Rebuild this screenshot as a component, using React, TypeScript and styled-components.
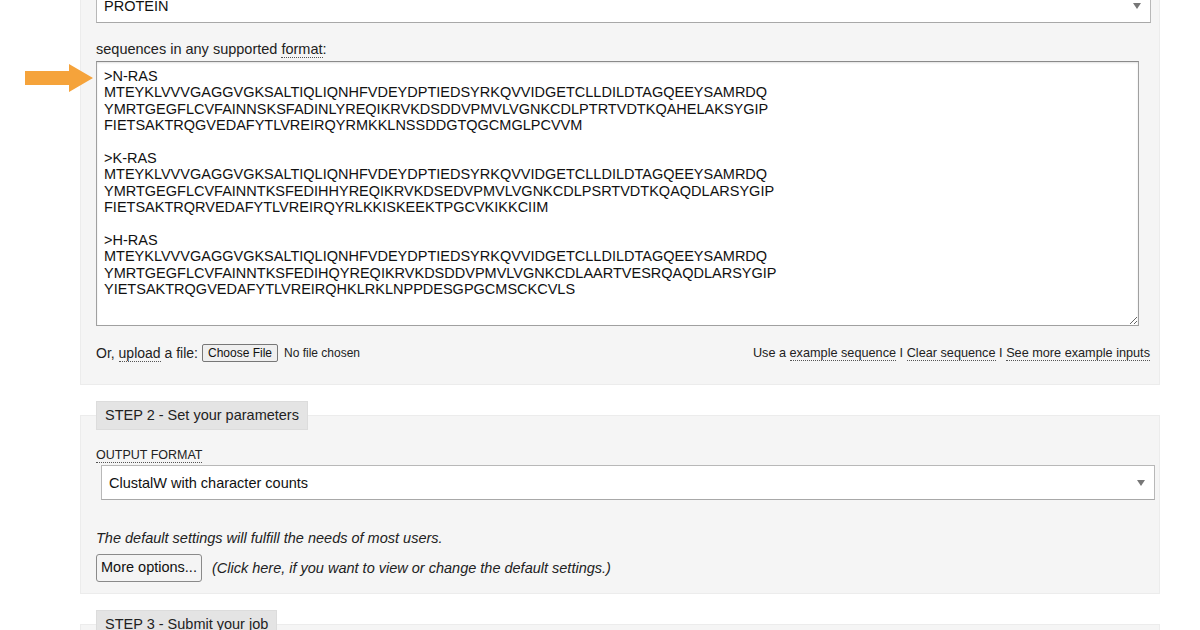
import React from 'react';
import styled, { createGlobalStyle } from 'styled-components';

const GlobalStyle = createGlobalStyle`
  html, body {
    margin: 0;
    padding: 0;
    background: #fff;
    font-family: 'Liberation Sans', Arial, Helvetica, sans-serif;
    color: #111;
    overflow: hidden;
  }
`;

const Page = styled.div`
  width: 1080px;
  margin: -12px 0 0 80px;
`;

const Panel = styled.div`
  background: #f5f5f5;
  border: 1px solid #ececec;
  border-top: none;
  padding: 0 15px 22px;
`;

const StepSet = styled.fieldset`
  margin: 16px 0 0;
  padding: 0 15px 11px;
  background: #f5f5f5;
  border: 1px solid #ececec;
  min-width: 0;
`;

const StepLegend = styled.legend`
  padding: 5px 8px 6px;
  margin: 0;
  background: #e4e4e4;
  border: 1px solid #dcdcdc;
  font-size: 14.5px;
  line-height: 16px;
  color: #222;
`;

type SelectProps = {
  readonly $indent?: number;
  readonly $overhang?: number;
};
const SelectBox = styled.div<SelectProps>`
  display: flex;
  align-items: center;
  justify-content: space-between;
  height: 35px;
  box-sizing: border-box;
  margin-left: ${(p) => p.$indent || 0}px;
  margin-right: ${(p) => -(p.$overhang || 0)}px;
  padding: 0 9px 0 7px;
  background: #fff;
  border: 1px solid #b8b8b8;
  border-bottom-color: #a8a8a8;
  font-size: 14.5px;
  color: #111;
`;

const Caret = styled.span`
  width: 0;
  height: 0;
  border-left: 4px solid transparent;
  border-right: 4px solid transparent;
  border-top: 6px solid #777;
`;

const Label = styled.div`
  font-size: 14.5px;
  line-height: 17px;
  color: #222;
  margin: 18px 0 3px;
`;

const SmallLabel = styled.div`
  font-size: 12.5px;
  line-height: 15px;
  color: #222;
  margin: 18px 0 2px;
`;

const Abbr = styled.span`
  border-bottom: 1px dotted #555;
`;

const InputArea = styled.div`
  position: relative;
  margin-right: 5px;
`;

const Sequence = styled.textarea`
  display: block;
  width: 100%;
  height: 265px;
  box-sizing: border-box;
  padding: 6px 7px;
  border: 1px solid #a0a0a0;
  border-top-color: #8a8a8a;
  box-shadow: inset 0 1px 2px rgba(0, 0, 0, 0.12);
  background: #fff;
  font-family: 'Liberation Sans', Arial, Helvetica, sans-serif;
  font-size: 14.5px;
  line-height: 16.4px;
  color: #111;
  resize: both;
  overflow: hidden;
  outline: none;
`;

const Pointer = styled.svg`
  position: absolute;
  left: -71px;
  top: 3px;
`;

const UploadRow = styled.div`
  display: flex;
  align-items: center;
  justify-content: space-between;
  margin-top: 18px;
  color: #222;
`;

const UploadLeft = styled.div`
  display: flex;
  align-items: center;
  font-size: 14px;
`;

const FileButton = styled.span`
  display: inline-block;
  margin-left: 4px;
  padding: 1px 5px;
  font-size: 12px;
  line-height: 14px;
  background: #efefef;
  border: 1px solid #777;
  border-radius: 2px;
  color: #111;
`;

const FileName = styled.span`
  margin-left: 6px;
  font-size: 12px;
  color: #222;
`;

const Links = styled.div`
  font-size: 12.7px;
  color: #222;
  margin-right: -6px;
`;

const DotLink = styled.span`
  border-bottom: 1px dotted #555;
`;

const Note = styled.div`
  font-size: 14.5px;
  font-style: italic;
  color: #222;
  margin: 30px 0 8px;
`;

const OptionsRow = styled.div`
  display: flex;
  align-items: center;
  gap: 10px;
`;

const Button = styled.span`
  display: inline-block;
  padding: 5px 4px 6px;
  font-size: 14.5px;
  line-height: 15px;
  background: #f4f4f4;
  border: 1px solid #8a8a8a;
  border-radius: 3px;
  color: #111;
`;

const Hint = styled.span`
  font-size: 14.5px;
  font-style: italic;
  color: #222;
`;

const Filler = styled.div`
  height: 40px;
`;

const sequenceText = `>N-RAS
MTEYKLVVVGAGGVGKSALTIQLIQNHFVDEYDPTIEDSYRKQVVIDGETCLLDILDTAGQEEYSAMRDQ
YMRTGEGFLCVFAINNSKSFADINLYREQIKRVKDSDDVPMVLVGNKCDLPTRTVDTKQAHELAKSYGIP
FIETSAKTRQGVEDAFYTLVREIRQYRMKKLNSSDDGTQGCMGLPCVVM

>K-RAS
MTEYKLVVVGAGGVGKSALTIQLIQNHFVDEYDPTIEDSYRKQVVIDGETCLLDILDTAGQEEYSAMRDQ
YMRTGEGFLCVFAINNTKSFEDIHHYREQIKRVKDSEDVPMVLVGNKCDLPSRTVDTKQAQDLARSYGIP
FIETSAKTRQRVEDAFYTLVREIRQYRLKKISKEEKTPGCVKIKKCIIM

>H-RAS
MTEYKLVVVGAGGVGKSALTIQLIQNHFVDEYDPTIEDSYRKQVVIDGETCLLDILDTAGQEEYSAMRDQ
YMRTGEGFLCVFAINNTKSFEDIHQYREQIKRVKDSDDVPMVLVGNKCDLAARTVESRQAQDLARSYGIP
YIETSAKTRQGVEDAFYTLVREIRQHKLRKLNPPDESGPGCMSCKCVLS`;

const App = () => {
  return (
    <>
      <GlobalStyle />
      <Page>
        <Panel>
          <SelectBox $overhang={7}>
            PROTEIN
            <Caret />
          </SelectBox>
          <Label>
            sequences in any supported <Abbr>format</Abbr>:
          </Label>
          <InputArea>
            <Pointer width="68" height="28" viewBox="0 0 68 28">
              <path d="M0 7 H44 V0 L68 14 L44 28 V21 H0 Z" fill="#f5a33b" />
            </Pointer>
            <Sequence defaultValue={sequenceText} spellCheck={false} />
          </InputArea>
          <UploadRow>
            <UploadLeft>
              Or,&nbsp;<Abbr>upload</Abbr>&nbsp;a file:
              <FileButton>Choose File</FileButton>
              <FileName>No file chosen</FileName>
            </UploadLeft>
            <Links>
              Use a <DotLink>example sequence</DotLink> I{' '}
              <DotLink>Clear sequence</DotLink> I{' '}
              <DotLink>See more example inputs</DotLink>
            </Links>
          </UploadRow>
        </Panel>

        <StepSet>
          <StepLegend>STEP 2 - Set your parameters</StepLegend>
          <SmallLabel>
            <Abbr>OUTPUT FORMAT</Abbr>
          </SmallLabel>
          <SelectBox $indent={5} $overhang={11}>
            ClustalW with character counts
            <Caret />
          </SelectBox>
          <Note>The default settings will fulfill the needs of most users.</Note>
          <OptionsRow>
            <Button>More options...</Button>
            <Hint>
              (Click here, if you want to view or change the default settings.)
            </Hint>
          </OptionsRow>
        </StepSet>

        <StepSet>
          <StepLegend>STEP 3 - Submit your job</StepLegend>
          <Filler />
        </StepSet>
      </Page>
    </>
  );
};

export default App;
